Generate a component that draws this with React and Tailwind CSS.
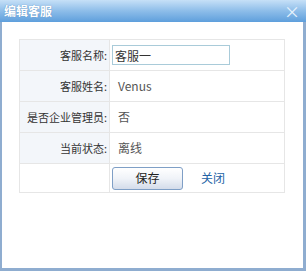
import React from "react";

function App() {
    const rows = [
        { label: "客服名称:", value: "客服一", input: true },
        { label: "客服姓名:", value: "Venus" },
        { label: "是否企业管理员:", value: "否" },
        { label: "当前状态:", value: "离线" },
    ];

    return (
        <div
            className="w-[306px] h-[271px] flex flex-col bg-[#8fadd0] text-[11px] text-[#333]"
            style={{ fontFamily: '"Noto Sans CJK SC", "Liberation Sans", sans-serif' }}
        >
            <div className="h-[22px] flex items-center justify-between pl-[4px] pr-[6px] bg-gradient-to-b from-[#c6e0f7] via-[#8dbde9] to-[#5e9fdc]">
                <span className="text-white font-bold text-[12px] leading-none [text-shadow:0_0_1px_#4a7fb5]">编辑客服</span>
                <span className="text-[#e8f3fd] text-[16px] leading-none">×</span>
            </div>
            <div className="flex-1 ml-[2px] mr-[3px] mb-[3px] bg-white pt-[17px] pl-[17px]">
                <table className="w-[266px] border-collapse border border-[#e6e6e6]">
                    <tbody>
                        {rows.map((r) => (
                            <tr key={r.label} className="h-[31px]">
                                <td className="w-[90px] bg-[#f3f6fa] border border-[#e6e6e6] text-right pr-[2px] whitespace-nowrap">
                                    {r.label}
                                </td>
                                <td className="border border-[#e6e6e6] pl-[2px]">
                                    {r.input ? (
                                        <input
                                            type="text"
                                            defaultValue={r.value}
                                            className="w-[118px] h-[20px] border border-[#a9cbd9] px-[2px] text-[12px] text-[#333] outline-none"
                                        />
                                    ) : (
                                        <span className="pl-[6px] text-[12px] text-[#555]">{r.value}</span>
                                    )}
                                </td>
                            </tr>
                        ))}
                        <tr className="h-[29px]">
                            <td className="bg-white border border-[#e6e6e6]"></td>
                            <td className="border border-[#e6e6e6] pl-[2px]">
                                <div className="flex items-center">
                                    <button className="w-[71px] h-[23px] rounded-[3px] border border-[#7f9fc6] bg-gradient-to-b from-white via-[#f0f3f8] to-[#d4dcea] text-[12px] text-[#222]">
                                        保存
                                    </button>
                                    <a className="ml-[18px] text-[#2563a6] text-[12px] cursor-pointer">关闭</a>
                                </div>
                            </td>
                        </tr>
                    </tbody>
                </table>
            </div>
        </div>
    );
}

export default App;
